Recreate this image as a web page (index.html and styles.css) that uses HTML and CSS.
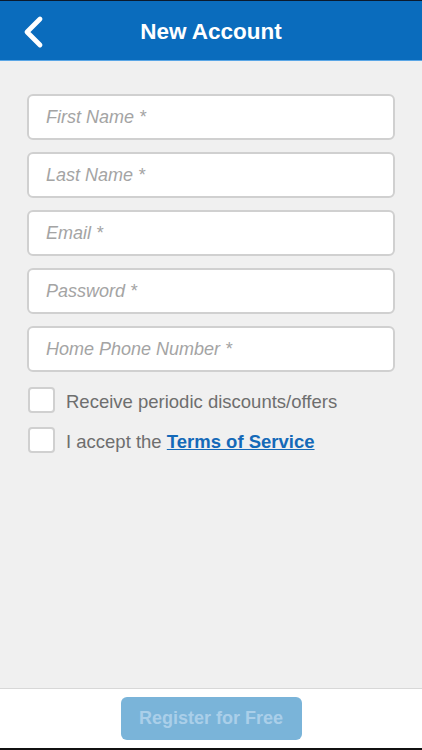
FILE: index.html
```html
<!DOCTYPE html>
<html lang="en">
<head>
  <meta charset="UTF-8" />
  <meta name="viewport" content="width=device-width, initial-scale=1.0"/>
  <title>New Account</title>
  <link rel="stylesheet" href="styles.css">
</head>
<body>
  <div class="app">
    <!-- HEADER -->
    <header class="topbar">
      <button class="back-btn" aria-label="Back">
        <svg width="24" height="34" viewBox="0 0 24 34">
          <path d="M19 4 L6 17 L19 30" fill="none" stroke="#fff" stroke-width="4.8" stroke-linecap="round" stroke-linejoin="round"/>
        </svg>
      </button>
      <h1>New Account</h1>
    </header>

    <!-- FORM -->
    <main class="form">
      <input type="text" placeholder="First Name *" />
      <input type="text" placeholder="Last Name *" />
      <input type="email" placeholder="Email *" />
      <input type="password" placeholder="Password *" />
      <input type="tel" placeholder="Home Phone Number *" />

      <label class="check-row">
        <span class="box"></span>
        <span>Receive periodic discounts/offers</span>
      </label>
      <label class="check-row">
        <span class="box"></span>
        <span>I accept the <a href="#">Terms of Service</a></span>
      </label>
    </main>

    <!-- FOOTER -->
    <footer class="bottombar">
      <button class="register-btn" disabled>Register for Free</button>
    </footer>
  </div>
</body>
</html>
```

FILE: styles.css
```css
:root {
  --blue: #0a6cbd;
  --bg: #f0f0f0;
  --border: #d0d0d0;
  --placeholder: #a4a4a4;
  --label: #6e6e6e;
}
* {
  box-sizing: border-box;
  font-family: 'Liberation Sans', Arial, sans-serif;
}
body {
  margin: 0;
  background-color: #0b1a2e;
}
.app {
  height: 750px;
  display: flex;
  flex-direction: column;
  border-top: 1px solid #0b1a2e;
  border-bottom: 2px solid #111;
  background-color: var(--bg);
}
.topbar {
  height: 60px;
  flex-shrink: 0;
  padding-top: 2px;
  background-color: var(--blue);
  border-bottom: 1px solid #5aa6e6;
  display: flex;
  align-items: center;
  justify-content: center;
  position: relative;
}
.back-btn {
  position: absolute;
  left: 21px;
  top: 14px;
  background: none;
  border: none;
  padding: 0;
  cursor: pointer;
}
.topbar h1 {
  margin: 0;
  color: #fff;
  font-size: 22.5px;
  font-weight: bold;
}
.form {
  flex: 1;
  padding: 33px 27px 0 27px;
  display: flex;
  flex-direction: column;
}
.form input {
  width: 100%;
  height: 46px;
  margin-bottom: 12px;
  padding: 0 17px;
  border: 2px solid var(--border);
  border-radius: 6px;
  background-color: #fff;
  font-size: 18px;
  color: #333;
}
.form input::placeholder {
  color: var(--placeholder);
  font-style: italic;
}
.check-row {
  display: flex;
  align-items: center;
  gap: 11px;
  height: 26px;
  margin-bottom: 14px;
  font-size: 18.5px;
  color: var(--label);
  padding-left: 1px;
}
.check-row:first-of-type {
  margin-top: 3px;
}
.check-row span:last-child {
  padding-top: 3px;
}
.box {
  width: 27px;
  height: 26px;
  flex-shrink: 0;
  border: 2px solid var(--border);
  border-radius: 4px;
  background-color: #fff;
}
.check-row a {
  color: #1469b8;
  font-weight: bold;
  text-decoration: underline;
}
.bottombar {
  height: 60px;
  flex-shrink: 0;
  background-color: #fff;
  border-top: 1px solid #d8d8d8;
  display: flex;
  justify-content: center;
  align-items: center;
}
.register-btn {
  width: 181px;
  height: 43px;
  border: none;
  border-radius: 6px;
  background-color: #7ab4d9;
  color: #aacfe9;
  font-size: 18px;
  font-weight: bold;
}
```
